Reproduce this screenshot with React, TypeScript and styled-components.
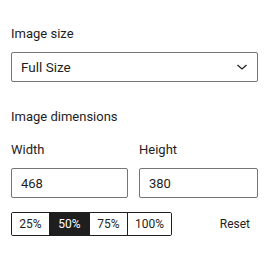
import React, { useState } from 'react';
import styled, { createGlobalStyle } from 'styled-components';

const GlobalStyle = createGlobalStyle`
    html, body {
        margin: 0;
        padding: 0;
        background: #ffffff;
    }
    body {
        font-family: Roboto, "Liberation Sans", Arial, sans-serif;
        color: #1e1e1e;
        -webkit-font-smoothing: antialiased;
    }
`;

const Panel = styled.div`
    width: 265px;
    height: 253px;
    box-sizing: border-box;
    padding: 26px 7px 0 11px;
    display: flex;
    flex-direction: column;
`;

const Label = styled.div`
    font-size: 13px;
    line-height: 16px;
    color: #1e1e1e;
`;

const Field = styled.div<{ gapBelow?: number }>`
    display: flex;
    flex-direction: column;
    gap: 10px;
    margin-bottom: ${(props) => props.gapBelow !== undefined ? `${props.gapBelow}px` : '0'};
`;

const SelectBox = styled.div`
    position: relative;
    height: 30px;
    box-sizing: border-box;
    border: 1px solid #757575;
    border-radius: 2px;
    display: flex;
    align-items: center;
    padding: 0 8px 0 9px;
    font-size: 13.5px;
    justify-content: space-between;
`;

const Chevron = styled.svg`
    width: 12px;
    height: 8px;
    margin-right: 1px;
`;

const DimRow = styled.div`
    display: grid;
    grid-template-columns: 117px 119px;
    column-gap: 11px;
    margin-bottom: 14px;
`;

const Input = styled.input`
    height: 30px;
    width: 100%;
    box-sizing: border-box;
    border: 1px solid #757575;
    border-radius: 2px;
    padding: 0 9px;
    font-family: inherit;
    font-size: 13px;
    color: #1e1e1e;
    outline: none;
`;

const ButtonRow = styled.div`
    display: flex;
    align-items: center;
    justify-content: space-between;
`;

const Segments = styled.div`
    display: flex;
    height: 24px;
    border: 1px solid #1e1e1e;
    border-radius: 2px;
    box-sizing: border-box;
    overflow: hidden;
`;

const Segment = styled.button<{ active?: boolean; w: number }>`
    width: ${(props) => props.w}px;
    height: 100%;
    border: 0;
    border-left: 1px solid #1e1e1e;
    padding: 0;
    margin: 0;
    font-family: inherit;
    font-size: 12px;
    background: ${(props) => props.active ? '#1e1e1e' : '#ffffff'};
    color: ${(props) => props.active ? '#ffffff' : '#1e1e1e'};
    &:first-child {
        border-left: 0;
    }
`;

const ResetButton = styled.button`
    border: 0;
    background: transparent;
    font-family: inherit;
    font-size: 12px;
    color: #1e1e1e;
    padding: 0 8px 0 0;
`;

const scales = [
    { name: '25%', w: 37 },
    { name: '50%', w: 40 },
    { name: '75%', w: 38 },
    { name: '100%', w: 44 },
];

export default function App() {
    const [width, setWidth] = useState('468')
    const [height, setHeight] = useState('380')
    const [scale, setScale] = useState('50%')

    return (
        <>
            <GlobalStyle />
            <Panel>
                <Field gapBelow={27}>
                    <Label>Image size</Label>
                    <SelectBox>
                        <span>Full Size</span>
                        <Chevron viewBox="0 0 12 8">
                            <path d="M1.5 2 L6 6 L10.5 2" fill="none" stroke="#1e1e1e" strokeWidth="1.2" />
                        </Chevron>
                    </SelectBox>
                </Field>
                <Field gapBelow={17}>
                    <Label>Image dimensions</Label>
                </Field>
                <DimRow>
                    <Field>
                        <Label>Width</Label>
                        <Input value={width} onChange={(e) => setWidth(e.target.value)} />
                    </Field>
                    <Field>
                        <Label>Height</Label>
                        <Input value={height} onChange={(e) => setHeight(e.target.value)} />
                    </Field>
                </DimRow>
                <ButtonRow>
                    <Segments>
                        {scales.map((s) =>
                            <Segment key={s.name} w={s.w} active={scale === s.name} onClick={() => setScale(s.name)}>
                                {s.name}
                            </Segment>
                        )}
                    </Segments>
                    <ResetButton>Reset</ResetButton>
                </ButtonRow>
            </Panel>
        </>
    )
}
